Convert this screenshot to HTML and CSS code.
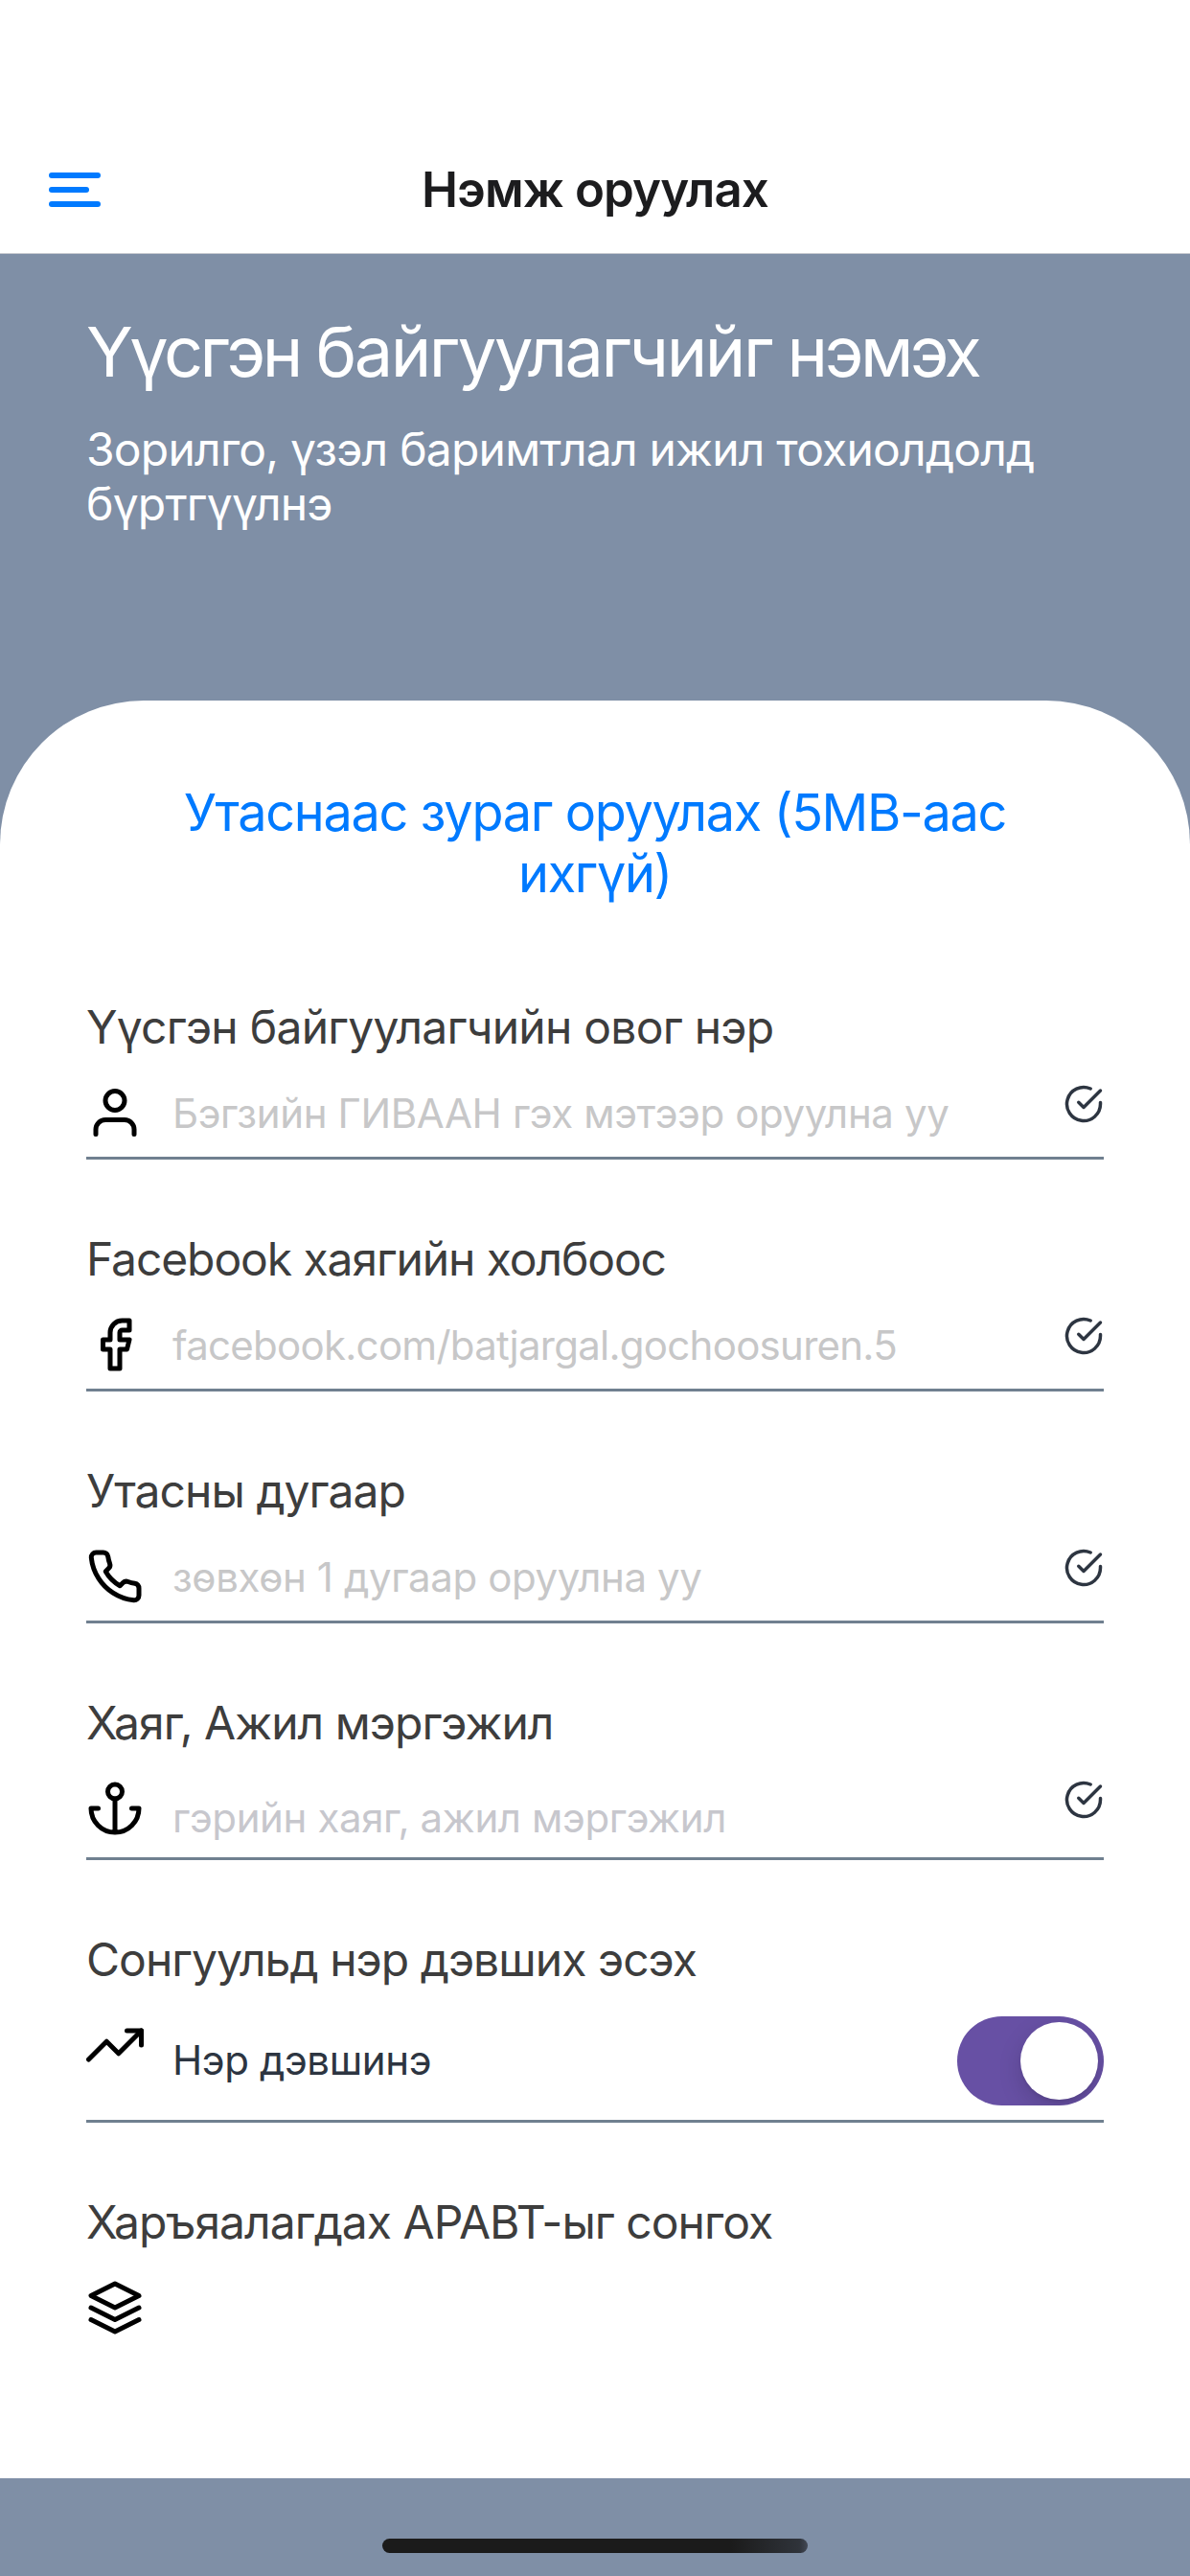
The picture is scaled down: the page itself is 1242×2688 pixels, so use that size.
FILE: index.html
```html
<!DOCTYPE html>
<html lang="mn">
<head>
<meta charset="utf-8">
<title>Нэмж оруулах</title>
<link rel="stylesheet" href="styles.css">
</head>
<body>
<svg class="sprite" aria-hidden="true">
  <symbol id="check" viewBox="0 0 24 24"><path d="M22 11.08V12a10 10 0 1 1-5.93-9.14"/><path d="M22 4 12 14.01l-3-3"/></symbol>
</svg>
<div class="screen">
  <header class="topbar">
    <button class="menu" aria-label="Цэс"><span class="bar"></span><span class="bar bar-short"></span><span class="bar"></span></button>
    <h1 class="topbar-title">Нэмж оруулах</h1>
  </header>
  <section class="hero">
    <h2 class="hero-title">Үүсгэн <span class="hero-word">байгуулагчийг</span> нэмэх</h2>
    <p class="hero-text">Зорилго, үзэл баримтлал ижил тохиолдолд<br>бүртгүүлнэ</p>
  </section>
  <main class="card">
    <button class="upload">Утаснаас зураг оруулах (5MB-аас<br>ихгүй)</button>
    <div class="field field-name">
      <div class="label">Үүсгэн байгуулагчийн овог нэр</div>
      <div class="row">
        <svg class="icon" viewBox="0 0 24 24"><path d="M20 21v-2a4 4 0 0 0-4-4H8a4 4 0 0 0-4 4v2"/><circle cx="12" cy="7" r="4"/></svg>
        <span class="hint">Бэгзийн ГИВААН гэх мэтээр оруулна уу</span>
        <svg class="check"><use href="#check"/></svg>
      </div>
    </div>
    <div class="field field-facebook">
      <div class="label">Facebook хаягийн холбоос</div>
      <div class="row">
        <svg class="icon" viewBox="0 0 24 24"><path d="M18 2h-3a5 5 0 0 0-5 5v3H7v4h3v8h4v-8h3l1-4h-4V7a1 1 0 0 1 1-1h3z"/></svg>
        <span class="hint">facebook.com/batjargal.gochoosuren.5</span>
        <svg class="check"><use href="#check"/></svg>
      </div>
    </div>
    <div class="field">
      <div class="label">Утасны дугаар</div>
      <div class="row">
        <svg class="icon" viewBox="0 0 24 24"><path d="M22 16.92v3a2 2 0 0 1-2.18 2 19.79 19.79 0 0 1-8.63-3.07 19.5 19.5 0 0 1-6-6 19.79 19.79 0 0 1-3.07-8.67A2 2 0 0 1 4.11 2h3a2 2 0 0 1 2 1.72 12.84 12.84 0 0 0 .7 2.81 2 2 0 0 1-.45 2.11L8.09 9.91a16 16 0 0 0 6 6l1.27-1.27a2 2 0 0 1 2.11-.45 12.84 12.84 0 0 0 2.81.7A2 2 0 0 1 22 16.92z"/></svg>
        <span class="hint">зөвхөн 1 дугаар оруулна уу</span>
        <svg class="check"><use href="#check"/></svg>
      </div>
    </div>
    <div class="field">
      <div class="label">Хаяг, Ажил мэргэжил</div>
      <div class="row row-area">
        <svg class="icon" viewBox="0 0 24 24"><circle cx="12" cy="5" r="3"/><path d="M12 22V8M5 12H2a10 10 0 0 0 20 0h-3"/></svg>
        <span class="hint">гэрийн хаяг, ажил мэргэжил</span>
        <svg class="check"><use href="#check"/></svg>
      </div>
    </div>
    <div class="field">
      <div class="label">Сонгуульд нэр дэвших эсэх</div>
      <div class="row row-switch">
        <svg class="icon" viewBox="0 0 24 24"><path d="M23 6l-9.5 9.5-5-5L1 18"/><path d="M17 6h6v6"/></svg>
        <span class="hint">Нэр дэвшинэ</span>
        <span class="switch" role="switch" aria-checked="true"><span class="knob"></span></span>
      </div>
    </div>
    <div class="field">
      <div class="label">Харъяалагдах АРАВТ-ыг сонгох</div>
      <div class="row row-last">
        <svg class="icon" viewBox="0 0 24 24"><path d="M12 2 2 7l10 5 10-5-10-5z"/><path d="M2 17l10 5 10-5M2 12l10 5 10-5"/></svg>
      </div>
    </div>
  </main>
  <footer class="home"><span class="home-bar"></span></footer>
</div>
</body>
</html>
```
FILE: styles.css
```css
* { box-sizing: border-box; margin: 0; padding: 0; }
body { background: #7f8fa6; font-family: Inter, "Noto Sans", sans-serif; }
button { border: 0; background: none; font: inherit; }
.sprite { display: none; }
.screen { width: 1242px; height: 2688px; display: flex; flex-direction: column; overflow: hidden; }

.topbar { height: 265px; padding: 132px 51px 0; background: #fff; border-bottom: 1px solid #c9ccd1; display: grid; grid-template-columns: 1fr auto 1fr; align-items: center; }
.menu { width: 54px; display: flex; flex-direction: column; gap: 9px; }
.bar { width: 54px; height: 6px; border-radius: 3px; background: #007aff; }
.bar-short { width: 42px; }
.topbar-title { font-size: 51px; line-height: 62px; font-weight: 600; letter-spacing: -.9px; color: #1c1c1e; }

.hero { height: 466px; padding: 59px 90px 0; color: #fff; }
.hero-title { font-size: 72px; line-height: 86px; font-weight: 400; letter-spacing: -3.5px; white-space: nowrap; }
.hero-word { letter-spacing: -2.45px; }
.hero-text { margin-top: 30px; font-size: 48px; line-height: 57px; letter-spacing: -.78px; white-space: nowrap; }

.card { height: 1855px; padding: 85px 90px 0; background: #fff; border-radius: 150px 150px 0 0; }
.upload { display: block; width: 100%; margin-bottom: 99px; font-size: 54px; line-height: 64px; letter-spacing: -1.33px; color: #007aff; text-align: center; }

.field { margin-bottom: 75px; }
.label { font-size: 48px; line-height: 57px; letter-spacing: -.96px; color: #3d3d3d; }
.row { margin-top: 31px; height: 79px; border-bottom: 3px solid #708090; display: flex; align-items: flex-start; }
.icon, .check { flex: none; fill: none; stroke: #000; stroke-width: 2; stroke-linecap: round; stroke-linejoin: round; }
.icon { width: 60px; height: 60px; }
.check { width: 42px; height: 42px; stroke: #2d3541; }
.hint { flex: 1; margin-left: 30px; padding-top: 6px; font-size: 42px; line-height: 50px; letter-spacing: -.38px; color: #c7c7c8; white-space: nowrap; }
.field-name .label { letter-spacing: -.75px; }
.field-facebook .label { letter-spacing: -1.1px; }
.field-facebook .hint { letter-spacing: -.73px; }
.row-area { height: 84px; }
.row-area .hint { padding-top: 15px; color: #c7c7cd; }
.row-switch { height: 111px; }
.row-switch .hint { padding-top: 21px; color: #2d3541; }
.row-last { border: 0; }

.switch { width: 153px; height: 93px; padding: 6px; border-radius: 47px; background: #6750a4; display: flex; justify-content: flex-end; overflow: hidden; }
.knob { width: 81px; height: 81px; border-radius: 50%; background: #fff; box-shadow: 0 9px 24px rgba(0, 0, 0, .15), 0 3px 3px rgba(0, 0, 0, .06); }

.home { height: 102px; padding-top: 63px; display: flex; justify-content: center; }
.home-bar { width: 444px; height: 15px; border-radius: 8px; background: linear-gradient(90deg, #1b1b1b 82%, #2f333a 98%, #434956); }
```
